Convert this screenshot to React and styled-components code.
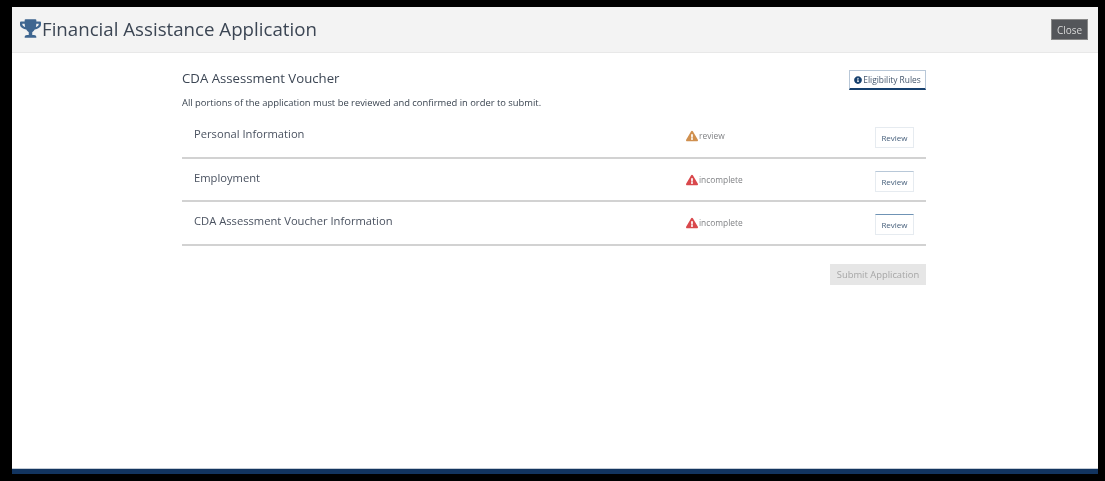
import React from 'react';
import styled, { createGlobalStyle } from 'styled-components';
import { FaTrophy, FaInfoCircle, FaExclamationTriangle } from 'react-icons/fa';

const GlobalStyle = createGlobalStyle`
  html, body {
    margin: 0;
    height: 100%;
    background: #000;
    font-family: "Open Sans", "Liberation Sans", sans-serif;
  }
  #root { height: 100%; }
`;

const sections = [
  { name: 'Personal Information', status: 'review', tone: 'warn', edge: '#e6ebf0' },
  { name: 'Employment', status: 'incomplete', tone: 'danger', edge: '#b8c8d8' },
  { name: 'CDA Assessment Voucher Information', status: 'incomplete', tone: 'danger', edge: '#6f93b5' },
];

export default function App() {
  return (
    <>
      <GlobalStyle />
      <Frame>
        <Modal>
          <Header>
            <Title>
              <FaTrophy size={21} color="#3f6690" />
              <span>Financial Assistance Application</span>
            </Title>
            <CloseButton>Close</CloseButton>
          </Header>
          <Body>
            <Content>
              <TopRow>
                <Heading>CDA Assessment Voucher</Heading>
                <RulesButton>
                  <FaInfoCircle size={8} color="#17406d" />
                  Eligibility Rules
                </RulesButton>
              </TopRow>
              <Note>All portions of the application must be reviewed and confirmed in order to submit.</Note>
              <List>
                {sections.map((s) => (
                  <Row key={s.name}>
                    <RowName>{s.name}</RowName>
                    <Status>
                      <FaExclamationTriangle size={12} color={s.tone === 'warn' ? '#d0904f' : '#d9484c'} />
                      {s.status}
                    </Status>
                    <ReviewButton $edge={s.edge}>Review</ReviewButton>
                  </Row>
                ))}
              </List>
              <Actions>
                <SubmitButton disabled>Submit Application</SubmitButton>
              </Actions>
            </Content>
          </Body>
          <BottomBar />
        </Modal>
      </Frame>
    </>
  );
}

const Frame = styled.div`
  box-sizing: border-box;
  height: 481px;
  padding: 7px 7px 7px 12px;
`;

const Modal = styled.div`
  height: 100%;
  display: flex;
  flex-direction: column;
  background: #fff;
  filter: blur(0.45px);
`;

const Header = styled.header`
  flex: 0 0 46px;
  box-sizing: border-box;
  display: flex;
  align-items: center;
  justify-content: space-between;
  padding: 0 10px 0 8px;
  background: #f3f3f3;
  border-bottom: 1px solid #e8e8e8;
`;

const Title = styled.h1`
  margin: 0 0 2px;
  display: flex;
  align-items: center;
  gap: 1px;
  font-size: 18.7px;
  font-weight: 400;
  color: #3c4654;
`;

const CloseButton = styled.button`
  width: 37px;
  height: 21px;
  padding: 0;
  border: 1px solid #888;
  background: #54565a;
  color: #d8d8d8;
  font: 400 10px "Open Sans", sans-serif;
`;

const Body = styled.main`
  flex: 1;
  display: flex;
  justify-content: flex-start;
  padding-left: 170px;
`;

const Content = styled.div`
  width: 744px;
  padding-top: 17px;
`;

const TopRow = styled.div`
  display: flex;
  align-items: flex-start;
  justify-content: space-between;
  height: 27px;
`;

const Heading = styled.h2`
  margin: 0;
  font-size: 13.2px;
  line-height: 17px;
  font-weight: 400;
  color: #3c4654;
`;

const RulesButton = styled.button`
  display: flex;
  align-items: center;
  justify-content: center;
  gap: 1px;
  width: 77px;
  height: 20px;
  margin-top: 0;
  padding: 0;
  background: #fff;
  border: 1px solid #b9c8d8;
  border-bottom: 2px solid #17406d;
  color: #44566c;
  font: 400 8.4px "Open Sans", sans-serif;
`;

const Note = styled.p`
  margin: 0 0 6px;
  font-size: 9.4px;
  line-height: 12px;
  color: #3a4450;
`;

const List = styled.div`
  display: flex;
  flex-direction: column;
`;

const Row = styled.div`
  display: grid;
  grid-template-columns: 492px 1fr 40px;
  align-items: start;
  height: 43.5px;
  padding: 11px 12px 0;
  box-sizing: border-box;
  border-bottom: 2px solid #d2d2d2;
`;

const RowName = styled.div`
  font-size: 11.2px;
  line-height: 15px;
  color: #4a5260;
`;

const Status = styled.div`
  display: flex;
  align-items: center;
  gap: 1px;
  margin-top: 4px;
  font-size: 8.4px;
  line-height: 12px;
  color: #808285;
`;

const ReviewButton = styled.button`
  width: 39px;
  height: 21px;
  margin: 1px 0 0 1px;
  padding: 0;
  background: #fff;
  border: 1px solid #e6ebf0;
  border-top-color: ${(p) => p.$edge};
  color: #47607c;
  font: 400 8px "Open Sans", sans-serif;
`;

const Actions = styled.div`
  display: flex;
  justify-content: flex-end;
  margin-top: 18px;
`;

const SubmitButton = styled.button`
  width: 96px;
  height: 21px;
  padding: 0;
  border: none;
  background: #e6e6e6;
  color: #a6a6a6;
  font: 400 9.4px "Open Sans", sans-serif;
`;

const BottomBar = styled.div`
  flex: 0 0 6px;
  box-sizing: border-box;
  background: #12345f;
  border-top: 1px solid #c4ccd6;
`;
